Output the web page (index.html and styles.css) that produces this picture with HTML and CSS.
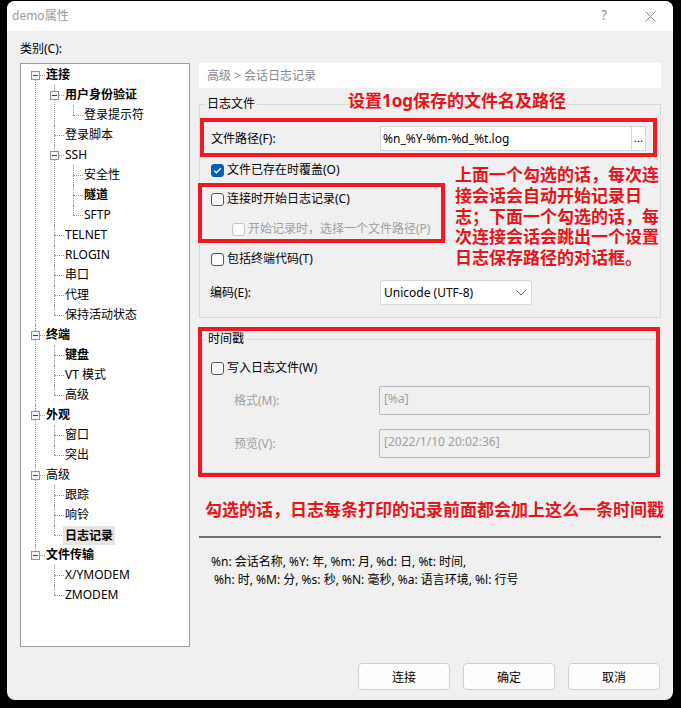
FILE: index.html
```html
<!DOCTYPE html>
<html lang="zh-CN">
<head>
    <meta charset="UTF-8">
    <title>demo属性</title>
    <link rel="stylesheet" href="styles.css">
</head>
<body>
    <div class="window">
        <div class="titlebar">
            <span class="title">demo属性</span>
            <span class="help-btn">?</span>
            <span class="tb-btn">
                <svg width="11" height="11" viewBox="0 0 11 11"><path d="M0.5 0.5L10.5 10.5M10.5 0.5L0.5 10.5" stroke="#8c8c8c" stroke-width="1"/></svg>
            </span>
        </div>

        <div class="content">
            <div class="main">
                <div class="left">
                    <div class="cat-label">类别(C):</div>
                    <div class="tree">
                        <ul>
                            <li>
                                <div class="row"><svg class="exp" width="9" height="9"><rect x="0.5" y="0.5" width="8" height="8" fill="#f6f6f6" stroke="#939393"/><path d="M2 4.5h5" stroke="#2b3f78"/></svg><span class="dash"></span><span class="bold">连接</span></div>
                                <ul>
                                    <li>
                                        <div class="row"><svg class="exp" width="9" height="9"><rect x="0.5" y="0.5" width="8" height="8" fill="#f6f6f6" stroke="#939393"/><path d="M2 4.5h5" stroke="#2b3f78"/></svg><span class="dash"></span><span class="bold">用户身份验证</span></div>
                                        <ul>
                                            <li><div class="row"><span class="twig"></span>登录提示符</div></li>
                                        </ul>
                                    </li>
                                    <li><div class="row"><span class="twig"></span>登录脚本</div></li>
                                    <li>
                                        <div class="row"><svg class="exp" width="9" height="9"><rect x="0.5" y="0.5" width="8" height="8" fill="#f6f6f6" stroke="#939393"/><path d="M2 4.5h5" stroke="#2b3f78"/></svg><span class="dash"></span>SSH</div>
                                        <ul>
                                            <li><div class="row"><span class="twig"></span>安全性</div></li>
                                            <li><div class="row"><span class="twig"></span><span class="bold">隧道</span></div></li>
                                            <li><div class="row"><span class="twig"></span>SFTP</div></li>
                                        </ul>
                                    </li>
                                    <li><div class="row"><span class="twig"></span>TELNET</div></li>
                                    <li><div class="row"><span class="twig"></span>RLOGIN</div></li>
                                    <li><div class="row"><span class="twig"></span>串口</div></li>
                                    <li><div class="row"><span class="twig"></span>代理</div></li>
                                    <li><div class="row"><span class="twig"></span>保持活动状态</div></li>
                                </ul>
                            </li>
                            <li>
                                <div class="row"><svg class="exp" width="9" height="9"><rect x="0.5" y="0.5" width="8" height="8" fill="#f6f6f6" stroke="#939393"/><path d="M2 4.5h5" stroke="#2b3f78"/></svg><span class="dash"></span><span class="bold">终端</span></div>
                                <ul>
                                    <li><div class="row"><span class="twig"></span><span class="bold">键盘</span></div></li>
                                    <li><div class="row"><span class="twig"></span>VT 模式</div></li>
                                    <li><div class="row"><span class="twig"></span>高级</div></li>
                                </ul>
                            </li>
                            <li>
                                <div class="row"><svg class="exp" width="9" height="9"><rect x="0.5" y="0.5" width="8" height="8" fill="#f6f6f6" stroke="#939393"/><path d="M2 4.5h5" stroke="#2b3f78"/></svg><span class="dash"></span><span class="bold">外观</span></div>
                                <ul>
                                    <li><div class="row"><span class="twig"></span>窗口</div></li>
                                    <li><div class="row"><span class="twig"></span>突出</div></li>
                                </ul>
                            </li>
                            <li>
                                <div class="row"><svg class="exp" width="9" height="9"><rect x="0.5" y="0.5" width="8" height="8" fill="#f6f6f6" stroke="#939393"/><path d="M2 4.5h5" stroke="#2b3f78"/></svg><span class="dash"></span>高级</div>
                                <ul>
                                    <li><div class="row"><span class="twig"></span>跟踪</div></li>
                                    <li><div class="row"><span class="twig"></span>响铃</div></li>
                                    <li><div class="row"><span class="twig"></span><span class="bold selected">日志记录</span></div></li>
                                </ul>
                            </li>
                            <li>
                                <div class="row"><svg class="exp" width="9" height="9"><rect x="0.5" y="0.5" width="8" height="8" fill="#f6f6f6" stroke="#939393"/><path d="M2 4.5h5" stroke="#2b3f78"/></svg><span class="dash"></span><span class="bold">文件传输</span></div>
                                <ul>
                                    <li><div class="row"><span class="twig"></span>X/YMODEM</div></li>
                                    <li><div class="row"><span class="twig"></span>ZMODEM</div></li>
                                </ul>
                            </li>
                        </ul>
                    </div>
                </div>

                <div class="panel">
                    <div class="crumb">高级 &gt; 会话日志记录</div>
                    <div class="note note-top">设置1og保存的文件名及路径</div>

                    <fieldset class="group group-file">
                        <legend>日志文件</legend>
                        <div class="redbox box-path">
                            <span class="field-label">文件路径(F):</span>
                            <div class="input">
                                <span class="input-text">%n_%Y-%m-%d_%t.log</span>
                                <span class="browse">...</span>
                            </div>
                        </div>

                        <div class="opts">
                            <div class="opts-left">
                                <div class="chk">
                                    <span class="cb on"><svg width="11" height="11" viewBox="0 0 11 11"><path d="M2.2 5.6L4.4 7.8L8.8 3.2" fill="none" stroke="#fff" stroke-width="1.3"/></svg></span>
                                    文件已存在时覆盖(O)
                                </div>
                                <div class="redbox box-start">
                                    <div class="chk"><span class="cb"></span>连接时开始日志记录(C)</div>
                                    <div class="chk disabled sub"><span class="cb"></span>开始记录时，选择一个文件路径(P)</div>
                                </div>
                                <div class="chk chk-codes"><span class="cb"></span>包括终端代码(T)</div>
                            </div>
                            <div class="note note-side">上面一个勾选的话，每次连<br>接会话会自动开始记录日<br>志；下面一个勾选的话，每<br>次连接会话会跳出一个设置<br>日志保存路径的对话框。</div>
                        </div>

                        <div class="enc-row">
                            <span class="enc-label">编码(E):</span>
                            <div class="select">
                                <span>Unicode (UTF-8)</span>
                                <svg width="10" height="6" viewBox="0 0 10 6"><path d="M0.5 0.5L5 5L9.5 0.5" fill="none" stroke="#5c5c5c"/></svg>
                            </div>
                        </div>
                    </fieldset>

                    <div class="redbox box-stamp">
                        <fieldset class="group group-stamp">
                            <legend>时间戳</legend>
                            <div class="chk"><span class="cb"></span>写入日志文件(W)</div>
                            <div class="stamp-row first">
                                <span class="stamp-label">格式(M):</span>
                                <div class="input-dis">[%a]</div>
                            </div>
                            <div class="stamp-row">
                                <span class="stamp-label">预览(V):</span>
                                <div class="input-dis">[2022/1/10 20:02:36]</div>
                            </div>
                        </fieldset>
                    </div>

                    <div class="note note-bottom">勾选的话，日志每条打印的记录前面都会加上这么一条时间戳</div>

                    <div class="separator"></div>

                    <div class="help">
                        <div>%n: 会话名称, %Y: 年, %m: 月, %d: 日, %t: 时间,</div>
                        <div class="help-2">%h: 时, %M: 分, %s: 秒, %N: 毫秒, %a: 语言环境, %l: 行号</div>
                    </div>
                </div>
            </div>

            <div class="footer">
                <button class="btn">连接</button>
                <button class="btn">确定</button>
                <button class="btn">取消</button>
            </div>
        </div>
    </div>
</body>
</html>
```

FILE: styles.css
```css
* {
    box-sizing: border-box;
}

body {
    margin: 0;
    background: #000;
    font-family: "Noto Sans", "Noto Sans CJK SC", sans-serif;
    font-size: 12px;
    line-height: 16px;
    color: #000;
}

.window {
    width: 666px;
    height: 699px;
    margin: 1px 0 0 7px;
    background: #f0f0f0;
    border-radius: 8px;
    overflow: hidden;
}

.titlebar {
    height: 30px;
    background: #fff;
    display: flex;
    align-items: center;
    padding-left: 5px;
    color: #9b9b9b;
}

.titlebar .title {
    flex: 1;
}

.tb-btn {
    width: 46px;
    height: 30px;
    display: flex;
    align-items: center;
    justify-content: center;
}

.help-btn {
    display: block;
    width: 46px;
    height: 30px;
    text-align: center;
    font-size: 14px;
    line-height: 28px;
    color: #9a9a9a;
}

.content {
    padding: 10px 12px 0 13px;
}

.main {
    display: flex;
    gap: 9px;
}

/* left: category tree */
.left {
    width: 170px;
}

.cat-label {
    height: 16px;
}

.tree {
    height: 584px;
    margin-top: 6px;
    background: #fff;
    border: 1px solid #9c9c9c;
    padding-top: 1px;
}

.tree ul {
    list-style: none;
    margin: 0;
    padding: 0;
}

.tree > ul {
    padding-left: 14px;
}

.tree ul ul {
    margin-left: 19px;
}

.tree li {
    position: relative;
}

.tree li::before {
    content: "";
    position: absolute;
    left: 0;
    top: 0;
    bottom: 0;
    border-left: 1px dotted #9a9a9a;
}

.tree li:last-child::before {
    bottom: auto;
    height: 10px;
}

.tree > ul > li:first-child::before {
    top: 10px;
}

.row {
    display: flex;
    align-items: center;
    height: 20px;
    white-space: nowrap;
}

.twig {
    width: 10px;
    margin-right: 1px;
    border-top: 1px dotted #9a9a9a;
}

.exp {
    flex: none;
    margin-left: -4px;
    position: relative;
}

.dash {
    width: 5px;
    margin-right: 1px;
    border-top: 1px dotted #9a9a9a;
}

.bold {
    font-weight: bold;
}

.selected {
    background: #e5e5e5;
    padding: 0 2px;
    margin-left: -2px;
    line-height: 19px;
}

/* right: settings panel */
.panel {
    width: 462px;
    margin-top: 22px;
    position: relative;
}

.crumb {
    height: 25px;
    line-height: 25px;
    background: #fff;
    padding-left: 8px;
    color: #8a8a8a;
}

.note {
    color: #e5151c;
    font-weight: bold;
    font-size: 17px;
    white-space: nowrap;
}

.note-top {
    position: absolute;
    left: 149px;
    top: 28px;
    line-height: 20px;
}

.group {
    margin: 0;
    padding: 0;
    min-width: 0;
    border: 1px solid #dadada;
}

.group legend {
    padding: 0 2px;
    line-height: 16px;
}

.group-file {
    margin-top: 8px;
    padding-bottom: 12px;
}

.group-file legend {
    margin-left: 5px;
}

.redbox {
    border: 4px solid #ed1c24;
}

.box-path {
    margin: 6px 3px 0 0;
    padding: 4px 7px 2px;
    display: flex;
    align-items: center;
}

.field-label {
    width: 169px;
}

.input {
    width: 266px;
    height: 25px;
    background: #fff;
    border: 1px solid #d6d6d6;
    display: flex;
    align-items: center;
}

.input-text {
    flex: 1;
    padding-left: 2px;
}

.browse {
    width: 14px;
    height: 23px;
    border-left: 1px solid #d6d6d6;
    text-align: center;
    line-height: 22px;
    font-size: 11px;
}

.opts {
    display: flex;
    margin-top: 3px;
}

.opts-left {
    width: 255px;
}

.chk {
    display: flex;
    align-items: center;
    height: 20px;
    white-space: nowrap;
}

.opts-left > .chk {
    margin-left: 11px;
}

.cb {
    flex: none;
    width: 13px;
    height: 13px;
    margin-right: 3px;
    border: 1px solid #555;
    border-radius: 3px;
    background: #fcfcfc;
}

.cb.on {
    background: #005fb8;
    border-color: #005fb8;
    display: flex;
    align-items: center;
    justify-content: center;
}

.chk.disabled {
    color: #a0a0a0;
}

.chk.disabled .cb {
    border-color: #c6c6c6;
}

.box-start {
    width: 247px;
    margin: 3px 0 0 -2px;
    padding: 2px 0 0 9px;
}

.box-start .sub {
    margin: 10px 0 0 21px;
}

.chk-codes {
    margin-top: 6px;
}

.note-side {
    margin-top: 5px;
    line-height: 20.8px;
}

.enc-row {
    display: flex;
    align-items: center;
    margin: 11px 0 0 10px;
}

.enc-label {
    width: 170px;
}

.select {
    width: 152px;
    height: 25px;
    background: #fff;
    border: 1px solid #d6d6d6;
    border-radius: 3px;
    display: flex;
    align-items: center;
    justify-content: space-between;
    padding: 0 5px 0 3px;
}

.box-stamp {
    margin: 9px 1px 0 -1px;
}

.group-stamp {
    padding-bottom: 14px;
}

.group-stamp legend {
    margin-left: 3px;
}

.group-stamp > .chk {
    margin: 11px 0 0 8px;
}

.stamp-row {
    display: flex;
    align-items: center;
    margin-top: 14px;
    padding-left: 31px;
}

.stamp-row.first {
    margin-top: 8px;
}

.stamp-label {
    width: 145px;
    color: #a0a0a0;
}

.input-dis {
    width: 271px;
    height: 29px;
    border: 1px solid #b9b9b9;
    border-radius: 2px;
    padding: 4px 0 0 4px;
    color: #a0a0a0;
}

.note-bottom {
    margin: 23px 0 0 6px;
    line-height: 20px;
}

.separator {
    height: 2px;
    margin-top: 16px;
    background: #707070;
}

.help {
    margin-top: 15px;
    padding-left: 12px;
    line-height: 18px;
}

.help-2 {
    padding-left: 3px;
}

.footer {
    display: flex;
    justify-content: flex-end;
    gap: 13px;
    margin-top: 16px;
    padding-right: 1px;
}

.btn {
    width: 92px;
    height: 27px;
    background: #fdfdfd;
    border: 1px solid #d0d0d0;
    border-radius: 4px;
    font-family: inherit;
    font-size: 12px;
    color: #000;
    padding: 0;
}
```
